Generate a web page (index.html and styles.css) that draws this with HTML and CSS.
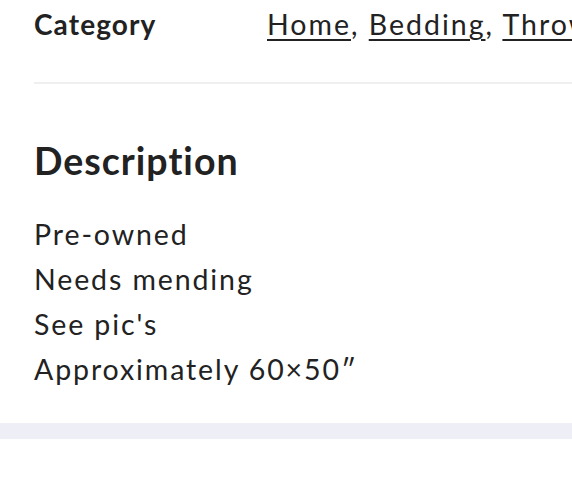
FILE: index.html
```html
<!DOCTYPE html>
<html>
<head>
<meta charset="utf-8">
<link rel="stylesheet" href="styles.css">
</head>
<body>
<div class="card">
  <div class="detail-row">
    <div class="detail-label">Category</div>
    <div class="detail-value"><a href="#">Home</a>, <a href="#">Bedding</a>, <a href="#">Throws</a></div>
  </div>
  <div class="description">
    <h2 class="desc-title">Description</h2>
    <div class="desc-body">
      <div>Pre-owned</div>
      <div>Needs mending</div>
      <div>See pic's</div>
      <div>Approximately 60×50″</div>
    </div>
  </div>
</div>
<div class="band"></div>
</body>
</html>
```

FILE: styles.css
```css
html, body {
  margin: 0;
  padding: 0;
  background: #fff;
  overflow: hidden;
}
body {
  font-family: Lato, "Noto Sans", sans-serif;
  color: #222;
  width: 572px;
}
.card {
  padding: 0 0 0 34px;
}
.detail-row {
  display: flex;
  align-items: baseline;
  height: 84px;
  border-bottom: 2px solid #efefef;
  box-sizing: border-box;
  padding-top: 4px;
  white-space: nowrap;
  overflow: hidden;
}
.detail-label {
  width: 233px;
  flex: none;
  font-size: 28px;
  line-height: 40px;
  font-weight: 700;
  letter-spacing: 1.1px;
}
.detail-value {
  font-size: 28.5px;
  line-height: 40px;
  letter-spacing: 2px;
}
.detail-value a {
  color: #222;
  text-decoration: underline;
  text-underline-offset: 4px;
  text-decoration-thickness: 2px;
}
.description {
  padding: 54px 0 31px;
}
.desc-title {
  margin: 0 0 29px;
  font-size: 37.5px;
  font-weight: 700;
  line-height: 45px;
  letter-spacing: 1px;
}
.desc-body {
  font-size: 28.5px;
  line-height: 45px;
  letter-spacing: 1.9px;
}
.band {
  height: 16px;
  background: #eeeef6;
}
```
